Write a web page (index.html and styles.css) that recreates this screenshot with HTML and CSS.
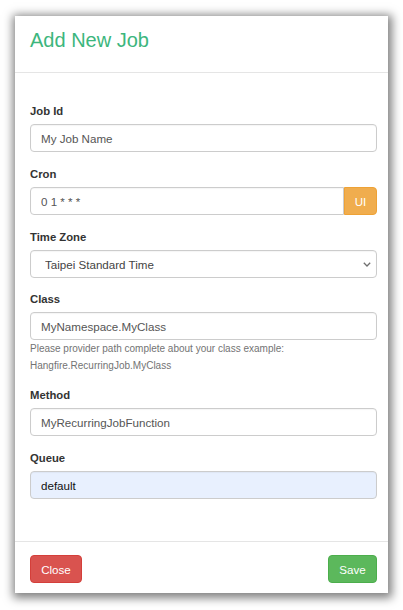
FILE: index.html
```html
<!DOCTYPE html>
<html lang="en">
<head>
<meta charset="utf-8">
<title>Add New Job</title>
<link rel="stylesheet" href="styles.css">
</head>
<body>
<div class="stage">
  <div class="modal">
    <div class="modal-header">
      <h4 class="modal-title">Add New Job</h4>
    </div>
    <form class="modal-body">
      <div class="group">
        <label class="label">Job Id</label>
        <input class="control" type="text" placeholder="My Job Name">
      </div>
      <div class="group">
        <label class="label">Cron</label>
        <div class="input-group">
          <input class="control control-joined" type="text" placeholder="0 1 * * *">
          <button type="button" class="btn btn-ui">UI</button>
        </div>
      </div>
      <div class="group group-tz">
        <label class="label">Time Zone</label>
        <div class="select-wrap">
          <select class="control select">
            <option>Taipei Standard Time</option>
          </select>
          <svg class="chevron" width="8" height="5" viewBox="0 0 8 5" aria-hidden="true">
            <path d="M0.8 0.8 L4 4 L7.2 0.8" fill="none" stroke="#6f6f6f" stroke-width="1.3"/>
          </svg>
        </div>
      </div>
      <div class="group group-help">
        <label class="label">Class</label>
        <input class="control" type="text" placeholder="MyNamespace.MyClass">
        <p class="help">Please provider path complete about your class example:<br>Hangfire.RecurringJob.MyClass</p>
      </div>
      <div class="group">
        <label class="label">Method</label>
        <input class="control" type="text" placeholder="MyRecurringJobFunction">
      </div>
      <div class="group last">
        <label class="label">Queue</label>
        <input class="control control-filled" type="text" value="default">
      </div>
    </form>
    <div class="modal-footer">
      <button type="button" class="btn btn-close">Close</button>
      <button type="button" class="btn btn-save">Save</button>
    </div>
  </div>
</div>
</body>
</html>
```
FILE: styles.css
```css
* { box-sizing: border-box; }

html, body {
  margin: 0;
  padding: 0;
  background: #ffffff;
  font-family: "Liberation Sans", Arial, sans-serif;
}

.stage {
  padding: 16px 15px 17px 15px;
}

.modal {
  width: 373px;
  background: #ffffff;
  box-shadow: 1px 2px 9px 3px rgba(0, 0, 0, 0.5);
}

.modal-header {
  height: 57px;
  padding: 11px 15px 0 15px;
  border-bottom: 1px solid #e5e5e5;
}

.modal-title {
  margin: 0;
  font-size: 20px;
  line-height: 26px;
  font-weight: normal;
  color: #3cb67d;
}

.modal-body {
  margin: 0;
  padding: 29px 11px 29px 15px;
}

.group {
  display: flex;
  flex-direction: column;
  margin-bottom: 13px;
}

.group-tz { margin-bottom: 12px; }
.group-help { margin-bottom: 12px; }
.group.last { margin-bottom: 13px; }

.label {
  display: block;
  height: 18px;
  line-height: 18px;
  margin-bottom: 4px;
  font-size: 11.3px;
  font-weight: bold;
  color: #333333;
}

.control {
  display: block;
  width: 100%;
  height: 28px;
  margin: 0;
  padding: 0 10px;
  border: 1px solid #cccccc;
  border-radius: 4px;
  background: #ffffff;
  font-family: "Liberation Sans", Arial, sans-serif;
  font-size: 11.6px;
  color: #555555;
  box-shadow: inset 0 1px 1px rgba(0, 0, 0, 0.04);
  outline: none;
}

.control::placeholder {
  color: #555555;
  opacity: 1;
}

.control-filled {
  background: #e8f0fe;
  color: #111111;
}

.select-wrap {
  position: relative;
}

.select {
  appearance: none;
  -webkit-appearance: none;
  padding: 0 20px 0 14px;
  color: #444444;
}

.chevron {
  position: absolute;
  right: 6px;
  top: 12px;
  pointer-events: none;
}

.input-group {
  display: flex;
}

.control-joined {
  flex: 1;
  border-radius: 4px 0 0 4px;
}

.btn {
  height: 28px;
  border: 1px solid transparent;
  border-radius: 4px;
  padding: 0;
  font-family: "Liberation Sans", Arial, sans-serif;
  font-size: 11.6px;
  color: #ffffff;
  cursor: pointer;
}

.btn-ui {
  width: 33px;
  flex: none;
  border-radius: 0 4px 4px 0;
  background: #f0ad4e;
  border-color: #eea236;
}

.help {
  margin: 0;
  font-size: 10px;
  line-height: 17px;
  color: #737373;
}

.modal-footer {
  display: flex;
  justify-content: space-between;
  padding: 13px 11px 10px 15px;
  border-top: 1px solid #e5e5e5;
}

.btn-close {
  width: 52px;
  background: #d9534f;
  border-color: #d43f3a;
}

.btn-save {
  width: 49px;
  background: #5cb85c;
  border-color: #4cae4c;
}
```
